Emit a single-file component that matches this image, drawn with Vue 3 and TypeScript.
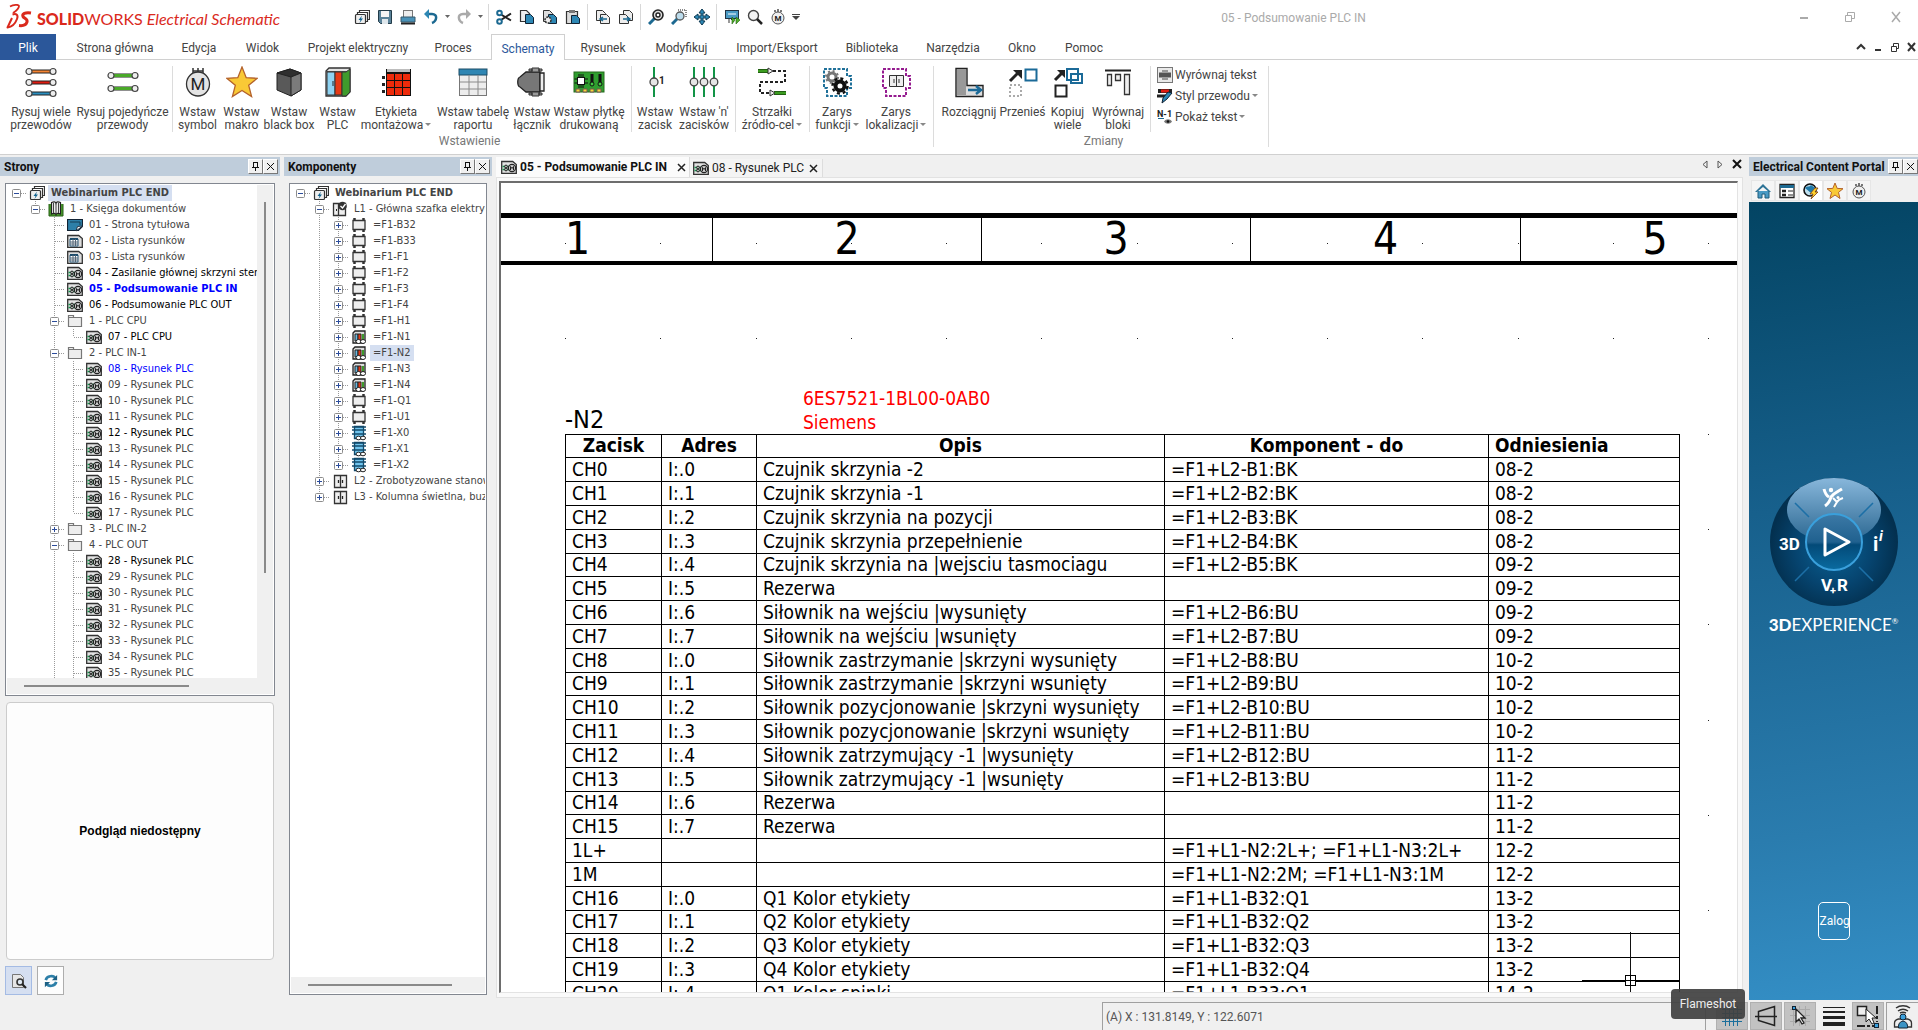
<script setup lang="ts">
interface RibbonItem { icon?: string; lines?: string[]; w?: number; caret?: boolean; sep?: boolean }
interface TreeRow { g: string; icon: string; text: string; cls?: string }

const icons: Record<string, string> = {
  wires3: `<g stroke="#222" fill="none"><path d="M4 5.500h24" stroke-width="4"/><path d="M4 16.500h24" stroke-width="4"/><path d="M4 27.500h24" stroke-width="4"/></g><path d="M4 5.500h24" stroke="#f58433" stroke-width="2"/><path d="M4 16.500h24" stroke="#e01b10" stroke-width="2"/><path d="M4 27.500h24" stroke="#2a8fc0" stroke-width="2"/><g fill="#eee" stroke="#444" stroke-width="1.200"><circle cx="4" cy="5.500" r="3"/><circle cx="28" cy="5.500" r="3"/><circle cx="4" cy="16.500" r="3"/><circle cx="28" cy="16.500" r="3"/><circle cx="4" cy="27.500" r="3"/><circle cx="28" cy="27.500" r="3"/></g>`,
  wires2: `<path d="M4 9.500h24M4 22.500h24" stroke="#222" stroke-width="4"/><path d="M4 9.500h24M4 22.500h24" stroke="#4aa929" stroke-width="3"/><g fill="#eee" stroke="#444" stroke-width="1.200"><circle cx="4" cy="9.500" r="3"/><circle cx="28" cy="9.500" r="3"/><circle cx="4" cy="22.500" r="3"/><circle cx="28" cy="22.500" r="3"/></g>`,
  motor: `<path d="M11 2v5M16 2v5M21 2v5M10.500 5h11" stroke="#333" stroke-width="1.500"/><ellipse cx="16" cy="18" rx="11.500" ry="12" fill="#e4e4e4" stroke="#333" stroke-width="1.300"/><text x="16" y="24" font-size="17" font-family="Roboto, sans-serif" text-anchor="middle" fill="#222">M</text>`,
  star: `<path d="M16 1l4.200 10.700 11 .6-8.500 7 2.900 11.200L16 24.500 6.400 30.500l2.900-11.200-8.500-7 11-.6z" fill="#f9c936" stroke="#b4622a" stroke-width="1.300"/>`,
  box: `<path d="M4 7l13-4 11 4v17l-10 6L4 24z" fill="#595959" stroke="#222"/><path d="M4 7l14 4 10-4-11-4z" fill="#2f2f2f" stroke="#222"/><path d="M18 11v19l10-6V7z" fill="#7b7b7b" stroke="#222"/>`,
  plc: `<path d="M4 5l3-3h21v24l-4 4H4z" fill="#e3e3e3" stroke="#333" stroke-width="1.300"/><path d="M4 5.500h21" stroke="#555"/><rect x="5" y="6" width="8" height="23" fill="#8fd3f2" stroke="#333"/><rect x="13" y="6" width="7" height="23" fill="#e53a16" stroke="#333"/><path d="M20 6h4l4-3v23l-4 4h-4z" fill="#3f9b2c" stroke="#333"/><path d="M11 15v5" stroke="#222"/>`,
  label: `<rect x="6" y="3" width="25" height="27" fill="#111"/><path d="M7 4.500h23" stroke="#bdbdbd" stroke-width="3"/><path d="M7 8h7v6H7zM15 8h7v6h-7zM23 8h7v6h-7zM7 15h7v6H7zM15 15h7v6h-7zM23 15h7v6h-7zM7 22h7v7H7zM15 22h7v7h-7zM23 22h7v7h-7z" fill="#ee2b0b"/><path d="M2 10h3v3H2zM2 17h3v3H2zM2 24h3v3H2z" fill="#222"/>`,
  table: `<rect x="2.500" y="3.500" width="27" height="26" fill="#ededed" stroke="#777"/><rect x="2" y="3" width="28" height="6" fill="#2f86b3" stroke="#1d4c66"/><path d="M3 16h26M3 23h26M12 9v20M21 9v20" stroke="#8a8a8a"/>`,
  connector: `<path d="M10 6h14v20H10l-6-5c-3-1-3-9 0-10z" fill="#777" stroke="#222" stroke-width="1.300"/><path d="M24 7h4v18h-4z" fill="#eee" stroke="#222" stroke-width="1.300"/><path d="M16 2h7v4h-7zM16 26h7v4h-7zM23 3h3v2h-3zM23 27h3v2h-3zM13 3h3v2h-3zM13 27h3v2h-3z" fill="#999" stroke="#333"/>`,
  pcb: `<rect x="1" y="6" width="30" height="20" fill="#2f9e2f" stroke="#246b1d"/><rect x="4.500" y="11.500" width="7" height="7" fill="#fff" stroke="#111"/><path d="M6 8v3M8 8v3M10 8v3M6 19v3M8 19v3M10 19v3M1.500 13h3M1.500 17h3M12 13h3M12 17h3" stroke="#111"/><path d="M19 8v9M27 8v9" stroke="#111" stroke-width="3"/><circle cx="19" cy="18" r="2" fill="#4c4" stroke="#111"/><circle cx="27" cy="18" r="2" fill="#4c4" stroke="#111"/><path d="M3 23h4v3H3zM10 23h4v3h-4zM17 23h4v3h-4zM24 23h4v3h-4z" fill="#f4d837" stroke="#755"/>`,
  term1: `<path d="M15 1v30" stroke="#129447" stroke-width="2"/><circle cx="15" cy="16" r="4" fill="#e6e6e6" stroke="#444" stroke-width="1.300"/><text x="20" y="18" font-size="10" font-weight="700" font-family="Roboto, sans-serif" fill="#222">1</text>`,
  termn: `<path d="M6 1v30M16 1v30M26 1v30" stroke="#129447" stroke-width="2"/><g fill="#e6e6e6" stroke="#444" stroke-width="1.300"><circle cx="6" cy="16" r="3.800"/><circle cx="16" cy="16" r="3.800"/><circle cx="26" cy="16" r="3.800"/></g>`,
  arrows: `<path d="M17 5h12v11H4v11h10" fill="none" stroke="#222" stroke-width="2" stroke-dasharray="3 2"/><path d="M2 5h12M18 27h12" stroke="#225f12" stroke-width="4"/><path d="M2 5h12M18 27h12" stroke="#3b9c20" stroke-width="2"/><path d="M12 2l5 3-5 3zM14 24l5 3-5 3z" fill="#eee" stroke="#333"/>`,
  func: `<path d="M3 3h23v7h4v12h-4v8H6v-8H3z" fill="none" stroke="#1f7099" stroke-width="2" stroke-dasharray="3 1.500"/><circle cx="11" cy="11" r="4" fill="none" stroke="#777" stroke-width="3"/><circle cx="11" cy="11" r="6" fill="none" stroke="#777" stroke-width="2" stroke-dasharray="2 2.700"/><circle cx="19" cy="20" r="4.500" fill="#fff" stroke="#111" stroke-width="4"/><circle cx="19" cy="20" r="7.500" fill="none" stroke="#111" stroke-width="2.500" stroke-dasharray="3 2.900"/>`,
  loc: `<path d="M3 3h23v7h4v12h-4v8H6v-8H3z" fill="none" stroke="#951b8f" stroke-width="2" stroke-dasharray="3 1.500"/><path d="M9.500 9.500h14v11h-14zM16.500 9.500v11" fill="#eee" stroke="#333"/><path d="M14 13v4M19 13v4" stroke="#333"/>`,
  stretch: `<path d="M3 2.500h11v17h16v11H3z" fill="#ddd" stroke="#222" stroke-width="1.400"/><path d="M4 3h9v26H4z" fill="#999"/><path d="M15 24h11M23 20l5 4-5 4" fill="none" stroke="#1b6a98" stroke-width="2.500"/>`,
  move: `<rect x="18.500" y="3.500" width="11" height="11" fill="#fff" stroke="#1b6a98" stroke-width="2"/><path d="M3 15L12 6" stroke="#222" stroke-width="3"/><path d="M6 4h9v9z" fill="#222"/><path d="M3 19h11v11H3z" fill="none" stroke="#aaa" stroke-width="2" stroke-dasharray="2 2"/>`,
  copy: `<path d="M15 3h11v11H15zM19 8h11v9H19z" fill="none" stroke="#1b6a98" stroke-width="2"/><path d="M3 14l7-7" stroke="#222" stroke-width="3"/><path d="M5 4h8v8z" fill="#222"/><rect x="3.500" y="19.500" width="11" height="11" fill="#fff" stroke="#222" stroke-width="2"/>`,
  align: `<path d="M3 4.500h26" stroke="#222" stroke-width="2"/><path d="M5.500 8.500h4v11h-4zM13.500 8.500h5v6h-5zM22.500 8.500h5v20h-5z" fill="#eee" stroke="#333" stroke-width="1.300"/>`,
}

const small: Record<string, string> = {
  project: `<path d="M5.500 3.500v-2h10v9h-2M3.500 5.500v-2h10v9h-2" fill="none" stroke="#333" stroke-width="1.200"/><rect x="1.500" y="5.500" width="10" height="9" rx="1" fill="#eee" stroke="#333" stroke-width="1.200"/><path d="M8 6.500L4.500 11h2L5.500 14 9 9.500H7z" fill="#12638f"/>`,
  save: `<path d="M1.500 1.500h13v13h-11l-2-2z" fill="#5a8299" stroke="#223b49"/><rect x="4" y="2" width="8" height="6" fill="#f5f5f5"/><rect x="5" y="10" width="6" height="5" fill="#dfe7ec"/>`,
  print: `<rect x="3.500" y="1.500" width="9" height="8" fill="#eee" stroke="#777"/><path d="M1 8h14v5H1z" fill="#4a92b8" stroke="#36586b"/><path d="M1 14.500h14" stroke="#222" stroke-width="2"/>`,
  undo: `<path d="M3 5h6c6 0 5 7 0 9" fill="none" stroke="#1c6991" stroke-width="2.500"/><path d="M1 5l5-5v10z" fill="#2d87b4"/>`,
  redo: `<path d="M13 5H7C1 5 2 12 7 14" fill="none" stroke="#aaa" stroke-width="2.500"/><path d="M15 5l-5-5v10z" fill="#aaa"/>`,
  cut: `<path d="M5 5.500l10 6M5 11l10-6.500" stroke="#222" stroke-width="2"/><circle cx="3.500" cy="4" r="2.300" fill="none" stroke="#1c6991" stroke-width="2"/><circle cx="3.500" cy="12.500" r="2.300" fill="none" stroke="#1c6991" stroke-width="2"/>`,
  copy: `<path d="M1.500 1.500h6l3 3v8h-9z" fill="#eee" stroke="#333" stroke-width="1.200"/><path d="M6.500 5.500h5l3 3v6h-8z" fill="#2d87b4" stroke="#123"/>`,
  copy2: `<path d="M1.500 1.500h6l3 3v8h-9z" fill="#ddd" stroke="#333"/><path d="M6.500 5.500h5l3 3v6h-8z" fill="#2d87b4" stroke="#123"/><circle cx="6" cy="11" r="3" fill="#eee" stroke="#333" stroke-width="1.600" stroke-dasharray="2 1"/>`,
  paste: `<path d="M1.500 2.500h11v12h-11z" fill="#ddd" stroke="#333" stroke-width="1.200"/><path d="M4 1h6v3H4z" fill="#777"/><path d="M6.500 6.500h5l3 3v5h-8z" fill="#2d87b4" stroke="#123"/>`,
  pageL: `<path d="M1.500 1.500h6l3 3v7h-9z" fill="#eee" stroke="#333"/><path d="M5.500 5.500h6l3 3v6h-9z" fill="#eee" stroke="#333"/><path d="M12 10H5m3-2l-3 2 3 2" stroke="#1c6991" stroke-width="1.500" fill="none"/>`,
  pageR: `<path d="M5.500 1.500h6l3 3v7h-9z" fill="#eee" stroke="#333"/><path d="M1.500 5.500h6l3 3v6h-9z" fill="#eee" stroke="#333"/><path d="M5 10h7m-3-2l3 2-3 2" stroke="#1c6991" stroke-width="1.500" fill="none"/>`,
  zoomfit: `<path d="M7 9l-6 6" stroke="#1c6991" stroke-width="3"/><circle cx="10" cy="6" r="5" fill="#ddd" stroke="#222" stroke-width="1.600"/><circle cx="10" cy="6" r="2" fill="#fff" stroke="#222" stroke-width="1.400"/>`,
  zoomsel: `<path d="M7 9l-6 6" stroke="#1c6991" stroke-width="3"/><path d="M7 1h8v8" fill="none" stroke="#111" stroke-dasharray="1 1"/><circle cx="9" cy="7" r="4" fill="#bcdcec" stroke="#555" stroke-width="1.300"/>`,
  pan: `<path d="M8 0l3 4H9v3h3V5l4 3-4 3V9H9v3h2l-3 4-3-4h2V9H4v2L0 8l4-3v2h3V4H5z" fill="#2d87b4" stroke="#0f3a52"/>`,
  display: `<rect x="1.500" y="1.500" width="13" height="8" fill="#4a9ac4" stroke="#234"/><path d="M4 5h8M6 10v3" stroke="#fff"/><path d="M5 10v4M7 10l3 3" stroke="#333"/><path d="M8 8l3 3-3 4zM12 8l4 3-4 4z" fill="#53b02c" stroke="#1f6113" stroke-width=".6"/>`,
  search: `<circle cx="6.500" cy="6.500" r="5" fill="#f3f3f3" stroke="#444" stroke-width="1.400"/><path d="M10 10l5 5" stroke="#222" stroke-width="2.500"/>`,
  motor: `<path d="M5 1v2M8 0v3M11 1v2" stroke="#333" stroke-width="1.300"/><circle cx="8" cy="9" r="6" fill="#eee" stroke="#555"/><text x="8" y="12" font-size="8" font-weight="700" font-family="Roboto, sans-serif" text-anchor="middle" fill="#222">M</text>`,
  book: `<path d="M1 3v12h14V3" fill="#4a9c2c" stroke="#245c14"/><path d="M3.500 1.500c2-1 4-1 4.500.500.500-1.500 2.500-1.500 4.500-.500V13c-2-1-4-1-4.500.500C7.500 12 5.500 12 3.500 13z" fill="#eee" stroke="#222" stroke-width="1.200"/><path d="M8 2v11M5.500 2v10M10.500 2v10" stroke="#444"/>`,
  cover: `<path d="M.5 2.500h15v7l-4 4H.5z" fill="#2d7fa8" stroke="#123" stroke-width="1.200"/><path d="M3 5h10v3" fill="none" stroke="#173f55"/><path d="M9 14l1.500-4.500 5-.5z" fill="#fff" stroke="#234"/>`,
  list: `<path d="M.7 2.500h11l3.600 3v8.800H.7z" fill="#ddd" stroke="#333" stroke-width="1.300"/><path d="M3 6h8v7H3z" fill="#fff" stroke="#2a5a7a"/><path d="M3 6h8" stroke="#1b4b6b" stroke-width="2"/><path d="M3 9h8M3 11h8M6 6v7M8.500 6v7" stroke="#567"/>`,
  drawing: `<path d="M.7 2.500h11l3.600 3v8.800H.7z" fill="#e2e2e2" stroke="#333" stroke-width="1.300"/><path d="M1.500 7.500h3M1.500 10.500h3M6 7.500h3M6 10.500h3" stroke="#13914a" stroke-width="1.400"/><circle cx="5" cy="7.500" r="1.400" fill="#bbb" stroke="#222"/><circle cx="5" cy="10.500" r="1.400" fill="#bbb" stroke="#222"/><circle cx="11" cy="9" r="3.600" fill="#ccc" stroke="#222" stroke-width="1.200"/><path d="M9.500 11V7.500l1.500 2 1.500-2V11" fill="none" stroke="#222"/>`,
  folder: `<path d="M1.500 13.500v-11h5v2h8v9z" fill="#eee" stroke="#777" stroke-width="1.200"/><path d="M1.500 4.500h5" stroke="#777"/>`,
  cabinetOn: `<path d="M1.500 2.500h12v12h-12zM6.500 2.500v12" fill="#eee" stroke="#333" stroke-width="1.300"/><path d="M4.500 8v2" stroke="#222"/><circle cx="10.500" cy="5" r="4.300" fill="#333"/><path d="M8.500 5l2 2 3-4" fill="none" stroke="#fff" stroke-width="1.300"/>`,
  cabinet: `<path d="M2.500 2.500h12v12h-12zM8.500 2.500v12" fill="#eee" stroke="#333" stroke-width="1.300"/><path d="M6.500 7v3M10.500 7v3" stroke="#222" stroke-width="1.300"/>`,
  comp: `<path d="M2 3.500h12v9H2z" fill="#eee" stroke="#333" stroke-width="1.300"/><path d="M3.500 1v2M12.500 1v2M3.500 13v2M12.500 13v2" stroke="#333" stroke-width="2.500"/>`,
  plc: `<path d="M2 4l2-2h10v10l-2 2H2z" fill="#ddd" stroke="#222" stroke-width="1.300"/><path d="M4 5h3v7H4z" fill="#68b9e0" stroke="#222"/><path d="M7 5h3v7H7z" fill="#e53a16" stroke="#222"/><path d="M11 5h2v6h-2z" fill="#3f9b2c"/><g fill="#fff" stroke="#222"><ellipse cx="7.500" cy="12.500" rx="2.500" ry="2"/><ellipse cx="12" cy="12.500" rx="2.500" ry="2"/></g>`,
  strip: `<path d="M3.500 1.500h9v12h-9z" fill="#6fc4ee" stroke="#124a6b" stroke-width="1.300"/><path d="M1 5h14M1 9h14M1 2h14" stroke="#124a6b" stroke-width="1.300"/><g fill="#fff" stroke="#222"><ellipse cx="7.500" cy="13" rx="2.500" ry="1.800"/><ellipse cx="12" cy="13" rx="2.500" ry="1.800"/></g>`,
  home: `<path d="M3 8v7h4v-4h3v4h4V8" fill="#4a9ac4" stroke="#1f5c7c"/><path d="M0 9l8-8 8 8h-2L8 4 2 9z" fill="#2d7396"/>`,
  form: `<path d="M1 1.500h14v13H1z" fill="#fff" stroke="#222" stroke-width="1.300"/><path d="M1 3.500h14" stroke="#1c6991" stroke-width="3"/><path d="M3 8h4M3 12h4" stroke="#222" stroke-width="2.500"/><path d="M9 8h5M9 12h5" stroke="#222"/>`,
  globe: `<circle cx="7" cy="7" r="6" fill="#bfe0ef" stroke="#111" stroke-width="1.600"/><path d="M2 5c3-3 4 0 6-3l4 3-4 5z" fill="#2079a8"/><path d="M12 5l-5 6h3l-2 5 7-7h-3l3-4z" fill="#ffd22e" stroke="#7a3d10" stroke-width=".8"/>`,
  star: `<path d="M8 0l2.200 5.400 5.800.300-4.500 3.700L13 15.500 8 12l-5 3.500 1.500-6.100L0 5.700l5.800-.3z" fill="#f9c936" stroke="#b4622a"/>`,
  txtAlign: `<rect x=".5" y=".5" width="15" height="15" fill="#e9e9e9" stroke="#777"/><path d="M5 4h6M5 12h6" stroke="#999" stroke-width="2"/><path d="M2 8h12" stroke="#555" stroke-width="5"/>`,
  wireStyle: `<path d="M1 3h14" stroke="#222" stroke-width="4"/><path d="M4 3h8" stroke="#e01b10" stroke-width="3"/><path d="M0 8h9" stroke="#222" stroke-width="3"/><path d="M15 5l-5 6-5 4 1-5 5-6z" fill="#2d87b4" stroke="#123"/>`,
  txtShow: `<text x="0" y="8" font-size="9" font-weight="700" font-family="Roboto, sans-serif" fill="#222">N-1</text><path d="M1 9.500h6" stroke="#1c6991"/><path d="M7 12.500c2-3 6-3 8 0-2 3-6 3-8 0z" fill="#777"/><circle cx="11" cy="12.500" r="1.300" fill="#111"/>`,
  preview: `<path d="M1.500 1.500h8l3 3v10h-11z" fill="#e6e6e6" stroke="#777"/><circle cx="9" cy="9" r="3" fill="#dfe9f3" stroke="#333" stroke-width="1.600"/><path d="M11 11l4 4" stroke="#222" stroke-width="2.200"/>`,
  refresh: `<path d="M2 7c1-5 9-6 11-2M14 9c-1 5-9 6-11 2" fill="none" stroke="#2d7fa8" stroke-width="3"/><path d="M15 1v6H9zM1 15V9h6z" fill="#1c5f83"/>`,
}

const qat: (string | null)[] = ['project', 'save', 'print', 'undo', 'caret', 'redo', 'caret', null, 'cut', 'copy', 'copy2', 'paste', null, 'pageL', 'pageR', null, 'zoomfit', 'zoomsel', 'pan', null, 'display', 'search', 'motor', 'more']

const tabs = [
  { t: 'Strona główna', w: 118 }, { t: 'Edycja', w: 50 }, { t: 'Widok', w: 77 }, { t: 'Projekt elektryczny', w: 114 },
  { t: 'Proces', w: 76 }, { t: 'Schematy', w: 74, on: true }, { t: 'Rysunek', w: 76 }, { t: 'Modyfikuj', w: 81 },
  { t: 'Import/Eksport', w: 110 }, { t: 'Biblioteka', w: 80 }, { t: 'Narzędzia', w: 82 }, { t: 'Okno', w: 56 }, { t: 'Pomoc', w: 68 },
]

const insertItems: RibbonItem[] = [
  { icon: 'wires3', lines: ['Rysuj wiele', 'przewodów'], w: 70 },
  { icon: 'wires2', lines: ['Rysuj pojedyńcze', 'przewody'], w: 93 },
  { sep: true },
  { icon: 'motor', lines: ['Wstaw', 'symbol'], w: 45 },
  { icon: 'star', lines: ['Wstaw', 'makro'], w: 43 },
  { icon: 'box', lines: ['Wstaw', 'black box'], w: 52 },
  { icon: 'plc', lines: ['Wstaw', 'PLC'], w: 45 },
  { icon: 'label', lines: ['Etykieta', 'montażowa'], w: 72, caret: true },
  { icon: 'table', lines: ['Wstaw tabelę', 'raportu'], w: 82 },
  { icon: 'connector', lines: ['Wstaw', 'łącznik'], w: 36 },
  { icon: 'pcb', lines: ['Wstaw płytkę', 'drukowaną'], w: 78 },
  { sep: true },
  { icon: 'term1', lines: ['Wstaw', 'zacisk'], w: 42 },
  { icon: 'termn', lines: ["Wstaw 'n'", 'zacisków'], w: 56 },
  { sep: true },
  { icon: 'arrows', lines: ['Strzałki', 'źródło-cel'], w: 68, caret: true },
  { sep: true },
  { icon: 'func', lines: ['Zarys', 'funkcji'], w: 50, caret: true },
  { icon: 'loc', lines: ['Zarys', 'lokalizacji'], w: 68, caret: true },
]
const editItems: RibbonItem[] = [
  { icon: 'stretch', lines: ['Rozciągnij'], w: 60 },
  { icon: 'move', lines: ['Przenieś'], w: 47 },
  { icon: 'copy', lines: ['Kopiuj', 'wiele'], w: 43 },
  { icon: 'align', lines: ['Wyrównaj', 'bloki'], w: 58 },
]
const textItems = [
  { icon: 'txtAlign', t: 'Wyrównaj tekst', caret: false },
  { icon: 'wireStyle', t: 'Styl przewodu', caret: true },
  { icon: 'txtShow', t: 'Pokaż tekst', caret: true },
]

// Guide codes: r root, m/M collapse (last/more), p/P expand (last/more), t tee, l elbow, | line
const drawing = (n: number, last = false, cls = ''): TreeRow => ({ g: last ? '  |l' : '  |t', icon: 'drawing', text: `${n} - Rysunek PLC`.padStart(16, '0'), cls })
const pages: TreeRow[] = [
  { g: 'r', icon: 'project', text: 'Webinarium PLC END', cls: 'bold marked' },
  { g: ' m', icon: 'book', text: '1 - Księga dokumentów' },
  { g: '  t', icon: 'cover', text: '01 - Strona tytułowa' },
  { g: '  t', icon: 'list', text: '02 - Lista rysunków' },
  { g: '  t', icon: 'list', text: '03 - Lista rysunków' },
  { g: '  t', icon: 'drawing', text: '04 - Zasilanie głównej skrzyni stero', cls: 'black' },
  { g: '  t', icon: 'drawing', text: '05 - Podsumowanie PLC IN', cls: 'bold blue' },
  { g: '  t', icon: 'drawing', text: '06 - Podsumowanie PLC OUT', cls: 'black' },
  { g: '  M', icon: 'folder', text: '1 - PLC CPU' },
  { g: '  |l', icon: 'drawing', text: '07 - PLC CPU', cls: 'black' },
  { g: '  M', icon: 'folder', text: '2 - PLC IN-1' },
  drawing(8, false, 'blue'), drawing(9), drawing(10), drawing(11), drawing(12, false, 'black'),
  drawing(13), drawing(14), drawing(15), drawing(16), drawing(17, true),
  { g: '  P', icon: 'folder', text: '3 - PLC IN-2' },
  { g: '  M', icon: 'folder', text: '4 - PLC OUT' },
  drawing(28, false, 'black'), drawing(29), drawing(30), drawing(31), drawing(32), drawing(33), drawing(34), drawing(35),
]
const comp = (name: string, icon = 'comp', cls = '', last = false): TreeRow => ({ g: last ? ' |p' : ' |P', icon, text: `=F1-${name}`, cls })
const components: TreeRow[] = [
  { g: 'r', icon: 'project', text: 'Webinarium PLC END', cls: 'bold' },
  { g: ' M', icon: 'cabinetOn', text: 'L1 - Główna szafka elektryc' },
  comp('B32'), comp('B33'), comp('F1'), comp('F2'), comp('F3'), comp('F4'), comp('H1'),
  comp('N1', 'plc'), comp('N2', 'plc', 'marked'), comp('N3', 'plc'), comp('N4', 'plc'),
  comp('Q1'), comp('U1'), comp('X0', 'strip'), comp('X1', 'strip'), comp('X2', 'strip', '', true),
  { g: ' P', icon: 'cabinet', text: 'L2 - Zrobotyzowane stanow' },
  { g: ' p', icon: 'cabinet', text: 'L3 - Kolumna świetlna, buzz' },
]
const trees = { pages, components }

function guide(c: string): string {
  let s = ''
  const line = (d: string) => `<path d="${d}" stroke="#9a9a9a" stroke-dasharray="1 1" fill="none"/>`
  if ('mpl'.includes(c)) s += line('M9.500 0v8')
  if ('MPt|'.includes(c)) s += line('M9.500 0v16')
  if (c !== '|' && c !== ' ') s += line('M10 8.500h9')
  if ('rmMpP'.includes(c)) {
    s += '<rect x="5.500" y="4.500" width="8" height="8" rx="1" fill="#fff" stroke="#8c8c8c"/><path d="M7 8.500h5" stroke="#2b4c9b"/>'
    if ('pP'.includes(c)) s += '<path d="M9.500 6v5" stroke="#2b4c9b"/>'
  }
  return s
}

const rows: string[][] = [
  ['CH0', 'I:.0', 'Czujnik skrzynia -2', '=F1+L2-B1:BK', '08-2'],
  ['CH1', 'I:.1', 'Czujnik skrzynia -1', '=F1+L2-B2:BK', '08-2'],
  ['CH2', 'I:.2', 'Czujnik skrzynia na pozycji', '=F1+L2-B3:BK', '08-2'],
  ['CH3', 'I:.3', 'Czujnik skrzynia przepełnienie', '=F1+L2-B4:BK', '08-2'],
  ['CH4', 'I:.4', 'Czujnik skrzynia na |wejsciu tasmociagu', '=F1+L2-B5:BK', '09-2'],
  ['CH5', 'I:.5', 'Rezerwa', '', '09-2'],
  ['CH6', 'I:.6', 'Siłownik na wejściu |wysunięty', '=F1+L2-B6:BU', '09-2'],
  ['CH7', 'I:.7', 'Siłownik na wejściu |wsunięty', '=F1+L2-B7:BU', '09-2'],
  ['CH8', 'I:.0', 'Siłownik zastrzymanie |skrzyni wysunięty', '=F1+L2-B8:BU', '10-2'],
  ['CH9', 'I:.1', 'Siłownik zastrzymanie |skrzyni wsunięty', '=F1+L2-B9:BU', '10-2'],
  ['CH10', 'I:.2', 'Siłownik pozycjonowanie |skrzyni wysunięty', '=F1+L2-B10:BU', '10-2'],
  ['CH11', 'I:.3', 'Siłownik pozycjonowanie |skrzyni wsunięty', '=F1+L2-B11:BU', '10-2'],
  ['CH12', 'I:.4', 'Siłownik zatrzymujący -1 |wysunięty', '=F1+L2-B12:BU', '11-2'],
  ['CH13', 'I:.5', 'Siłownik zatrzymujący -1 |wsunięty', '=F1+L2-B13:BU', '11-2'],
  ['CH14', 'I:.6', 'Rezerwa', '', '11-2'],
  ['CH15', 'I:.7', 'Rezerwa', '', '11-2'],
  ['1L+', '', '', '=F1+L1-N2:2L+; =F1+L1-N3:2L+', '12-2'],
  ['1M', '', '', '=F1+L1-N2:2M; =F1+L1-N3:1M', '12-2'],
  ['CH16', 'I:.0', 'Q1 Kolor etykiety', '=F1+L1-B32:Q1', '13-2'],
  ['CH17', 'I:.1', 'Q2 Kolor etykiety', '=F1+L1-B32:Q2', '13-2'],
  ['CH18', 'I:.2', 'Q3 Kolor etykiety', '=F1+L1-B32:Q3', '13-2'],
  ['CH19', 'I:.3', 'Q4 Kolor etykiety', '=F1+L1-B32:Q4', '13-2'],
  ['CH20', 'I:.4', 'Q1 Kolor spinki', '=F1+L1-B33:Q1', '14-2'],
]
const dots: { x: number; y: number }[] = []
for (let r = 0; r < 9; r++) for (let c = 0; c < 13; c++) dots.push({ x: 64 + Math.round(c * 95.25), y: 60 + Math.round(r * 95.3) })
</script>

<template>
  <div class="app">
    <header class="title">
      <svg class="ds" width="26" height="26" viewBox="0 0 26 26" fill="none" stroke="#da291c" stroke-linejoin="round">
        <path d="M4 2.500c3-1.500 9-2.500 9-.5 0 2-3 5-6 7" stroke-width="1.800" />
        <path d="M6.500 10.500c4-1.500 6 .5 4.500 4.500-1.500 4-5 8-9.500 8.500l4.500-9.500" stroke-width="2" />
        <path d="M25 9c-6-1-9 1-8 3.500 1 2 5 2.500 4 5.500-1 3-4 4-8 3.500" stroke-width="3" />
      </svg>
      <h1 class="brand"><b>SOLID</b>WORKS <i>Electrical Schematic</i></h1>
      <div class="qat">
        <template v-for="(q, i) in qat" :key="i">
          <span v-if="q === null" class="qsep"></span>
          <button v-else-if="q === 'caret'" class="qcaret" aria-label="Lista"><svg width="5" height="3"><path d="M0 0h5L2.500 3z" fill="#666" /></svg></button>
          <button v-else-if="q === 'more'" class="qcaret more" aria-label="Dostosuj"><svg width="8" height="6"><path d="M0 0h8v1H0zM0 2h8L4 6z" fill="#444" /></svg></button>
          <button v-else class="qbtn" :aria-label="q"><svg width="16" height="16" viewBox="0 0 16 16" v-html="small[q]"></svg></button>
        </template>
      </div>
      <div class="caption">05 - Podsumowanie PLC IN</div>
      <div class="win">
        <button aria-label="Minimalizuj"><svg width="12" height="12"><path d="M2 7h8" stroke="#aaa" stroke-width="2" /></svg></button>
        <button aria-label="Przywróć"><svg width="12" height="12"><path d="M1.500 4.500h6v6h-6zM3.500 4V1.500h7v6H8" fill="none" stroke="#aaa" /></svg></button>
        <button aria-label="Zamknij"><svg width="12" height="12"><path d="M2 1l8 10M10 1L2 11" stroke="#aaa" stroke-width="1.500" /></svg></button>
      </div>
    </header>

    <nav class="tabs">
      <button class="file">Plik</button>
      <button v-for="t in tabs" :key="t.t" class="tab" :class="{ on: t.on }" :style="{ width: t.w + 'px' }">{{ t.t }}</button>
      <div class="mdi">
        <svg width="12" height="12"><path d="M2 8l4-4 4 4" fill="none" stroke="#333" stroke-width="2" /></svg>
        <svg width="12" height="12"><path d="M3 9h6" stroke="#333" stroke-width="2" /></svg>
        <svg width="12" height="12"><path d="M2.500 5.500h5v5h-5zM4.500 5V2.500h5v5H8" fill="none" stroke="#333" /></svg>
        <svg width="12" height="12"><path d="M2 2l7 8M9 2l-7 8" stroke="#333" stroke-width="2" /></svg>
      </div>
    </nav>

    <section class="ribbon">
      <div class="group first">
        <div class="items">
          <template v-for="(it, i) in insertItems" :key="i">
            <span v-if="it.sep" class="rsep"></span>
            <button v-else class="rbtn" :style="{ width: it.w + 'px' }">
              <svg width="32" height="32" viewBox="0 0 32 32" v-html="icons[it.icon!]"></svg>
              <span>{{ it.lines![0] }}</span>
              <span>{{ it.lines![1] }}<i v-if="it.caret" class="car"></i></span>
            </button>
          </template>
        </div>
        <div class="glabel">Wstawienie</div>
      </div>
      <div class="group second">
        <div class="items">
          <button v-for="it in editItems" :key="it.icon" class="rbtn" :style="{ width: it.w + 'px' }">
            <svg width="32" height="32" viewBox="0 0 32 32" v-html="icons[it.icon!]"></svg>
            <span v-for="l in it.lines" :key="l">{{ l }}</span>
          </button>
          <span class="rsep"></span>
          <div class="stack">
            <button v-for="it in textItems" :key="it.t"><svg width="16" height="16" viewBox="0 0 16 16" v-html="small[it.icon]"></svg><span>{{ it.t }}<i v-if="it.caret" class="car"></i></span></button>
          </div>
        </div>
        <div class="glabel">Zmiany</div>
      </div>
    </section>

    <main class="main">
      <aside v-for="(list, key) in trees" :key="key" class="panel" :class="key">
        <div class="phead">
          <h2>{{ key === 'pages' ? 'Strony' : 'Komponenty' }}</h2>
          <button class="pb" aria-label="Przypnij"><svg width="9" height="9"><path d="M2.500 1v4M6.500 1v4M2 .5h5M1 5.500h7M4.500 6v3" stroke="#111" fill="none" /></svg></button>
          <button class="pb" aria-label="Zamknij"><svg width="9" height="9"><path d="M1 1l7 7M8 1L1 8" stroke="#111" /></svg></button>
        </div>
        <div class="treebox">
          <div class="mid">
            <ul class="tree">
              <li v-for="(n, i) in list" :key="i">
                <svg v-for="(c, j) in n.g" :key="j" class="gd" width="19" height="16" v-html="guide(c)"></svg>
                <svg class="ni" width="16" height="16" viewBox="0 0 16 16" v-html="small[n.icon]"></svg>
                <span :class="n.cls">{{ n.text }}</span>
              </li>
            </ul>
            <div v-if="key === 'pages'" class="vbar"><i></i></div>
          </div>
          <div class="hbar"><i></i></div>
        </div>
        <template v-if="key === 'pages'">
          <div class="preview">Podgląd niedostępny</div>
          <div class="pbtns">
            <button class="sel" aria-label="Podgląd"><svg width="16" height="16" viewBox="0 0 16 16" v-html="small.preview"></svg></button>
            <button aria-label="Odśwież"><svg width="14" height="14" viewBox="0 0 16 16" v-html="small.refresh"></svg></button>
          </div>
        </template>
      </aside>

      <section class="doc">
        <div class="dtabs">
          <button class="dtab on"><svg width="16" height="16" viewBox="0 0 16 16" v-html="small.drawing"></svg><span>05 - Podsumowanie PLC IN</span><svg width="9" height="9"><path d="M1 1l7 7M8 1L1 8" stroke="#222" stroke-width="1.500" /></svg></button>
          <button class="dtab"><svg width="16" height="16" viewBox="0 0 16 16" v-html="small.drawing"></svg><span>08 - Rysunek PLC</span><svg width="9" height="9"><path d="M1 1l7 7M8 1L1 8" stroke="#222" stroke-width="1.500" /></svg></button>
          <div class="dnav">
            <svg width="6" height="9"><path d="M5 1v7L1 4.500z" fill="none" stroke="#555" /></svg>
            <svg width="6" height="9"><path d="M1 1v7l4-3.500z" fill="none" stroke="#555" /></svg>
            <svg width="10" height="10"><path d="M1 1l8 8M9 1L1 9" stroke="#111" stroke-width="2" /></svg>
          </div>
        </div>
        <div class="frame">
          <div class="canvas">
            <svg class="dots" width="1300" height="860"><rect v-for="(d, i) in dots" :key="i" :x="d.x" :y="d.y" width="1" height="1" fill="#222" /></svg>
            <div class="strip"><span v-for="n in 5" :key="n">{{ n }}</span></div>
            <div class="heading">
              <div class="mark">-N2</div>
              <div class="part">6ES7521-1BL00-0AB0<br />Siemens</div>
            </div>
            <table class="io">
              <colgroup><col class="c1" /><col class="c2" /><col class="c3" /><col class="c4" /><col class="c5" /></colgroup>
              <thead><tr><th>Zacisk</th><th>Adres</th><th>Opis</th><th>Komponent - do</th><th>Odniesienia</th></tr></thead>
              <tbody><tr v-for="r in rows" :key="r[0]"><td v-for="(c, i) in r" :key="i">{{ c }}</td></tr></tbody>
            </table>
            <svg class="cross" width="98" height="60"><path d="M48.500 0v43M48.500 54v6" stroke="#111" /><path d="M0 49h98" stroke="#000" stroke-width="2" /><rect x="43.500" y="43.500" width="10" height="10" fill="#fff" stroke="#000" /><path d="M48.500 44v10M44 48.500h10" stroke="#000" /></svg>
          </div>
        </div>
      </section>

      <aside class="panel ecp">
        <div class="phead">
          <h2>Electrical Content Portal</h2>
          <button class="pb" aria-label="Przypnij"><svg width="9" height="9"><path d="M2.500 1v4M6.500 1v4M2 .5h5M1 5.500h7M4.500 6v3" stroke="#111" fill="none" /></svg></button>
          <button class="pb" aria-label="Zamknij"><svg width="9" height="9"><path d="M1 1l7 7M8 1L1 8" stroke="#111" /></svg></button>
        </div>
        <div class="etabs">
          <button v-for="n in ['home', 'form', 'globe', 'star', 'motor']" :key="n" :class="{ on: n === 'globe' }" :aria-label="n"><svg width="16" height="16" viewBox="0 0 16 16" v-html="small[n]"></svg></button>
        </div>
        <div class="portal">
          <svg class="compass" width="130" height="130" viewBox="0 0 130 130">
            <defs>
              <radialGradient id="ball" cx=".5" cy=".55" r=".5"><stop offset="0" stop-color="#0a6396" /><stop offset=".6" stop-color="#06446f" /><stop offset="1" stop-color="#03304f" /></radialGradient>
              <linearGradient id="glass" x1="0" y1="0" x2="0" y2="1"><stop offset="0" stop-color="#88b7db" /><stop offset="1" stop-color="#2a6690" /></linearGradient>
              <linearGradient id="core" x1="0" y1="0" x2="0" y2="1"><stop offset="0" stop-color="#3c79a6" /><stop offset=".5" stop-color="#20618f" /><stop offset=".55" stop-color="#034a78" /><stop offset="1" stop-color="#0a6ba0" /></linearGradient>
            </defs>
            <circle cx="65" cy="65" r="64" fill="url(#ball)" />
            <ellipse cx="65" cy="33" rx="47" ry="32" fill="url(#glass)" />
            <path d="M26 26l14 14M104 26L90 40M26 104l14-14M104 104L90 90" stroke="#1c6fa6" stroke-width="1.500" />
            <circle cx="65" cy="65" r="28" fill="url(#core)" stroke="#3aa0dc" stroke-width="2" />
            <path d="M56 52v26l24-13z" fill="none" stroke="#fff" stroke-width="3" stroke-linejoin="round" />
            <g stroke="#fff" fill="none"><path d="M55 12c1 4 3 7 5 8M73 12c-5 3-8 4-11 8-1 4-3 7-6 9" stroke-width="3" /><path d="M64 21l4 4M74 21c-3 1-5 2-6 4l-3 5" stroke-width="2" /></g><circle cx="62" cy="13" r="2.200" fill="#fff" /><circle cx="69" cy="20.500" r="1.500" fill="#fff" />
            <g fill="#fff" font-family="Roboto, sans-serif" font-weight="700"><text x="10" y="73" font-size="17">3D</text><text x="52" y="114" font-size="17">V</text><text x="61" y="117" font-size="11">+</text><text x="68" y="114" font-size="17">R</text><text x="104" y="74" font-size="20">i</text><text x="110" y="64" font-size="15" font-style="italic">i</text></g>
          </svg>
          <div class="exp"><b>3D</b>EXPERIENCE<sup>®</sup></div>
          <button class="login">Zalog</button>
        </div>
      </aside>
    </main>

    <footer class="status">
      <output class="coords">(A) X : 131.8149, Y : 122.6071</output>
      <button class="sb dark" aria-label="Siatka"><svg width="24" height="24"><path d="M5.500 2v20M9.500 2v20M13.500 2v20M17.500 2v20M2 5.500h20M2 9.500h20M2 13.500h20M2 17.500h20" stroke="#1b6f9c" /></svg></button>
      <button class="sb dark" aria-label="Ortogonalnie"><svg width="24" height="24"><path d="M4.500 7.500l16-5v19l-16-5z" fill="none" stroke="#222" stroke-width="1.500" /><path d="M1 12.500h22" stroke="#222" stroke-width="1.500" /></svg></button>
      <button class="sb dark" aria-label="Przyciąganie"><svg width="24" height="24"><path d="M5.500 2v20M11.500 2v20M17.500 2v20M2 5.500h20M2 11.500h20M2 17.500h20" stroke="#aaa" /><path d="M8 5v13l3-3 3 5 2-1-3-5h4z" fill="#eee" stroke="#222" stroke-width="1.300" /><rect x="4.500" y="2.500" width="3" height="3" fill="#3aa0dc" stroke="#123" /></svg></button>
      <button class="sb" aria-label="Grubość linii"><svg width="24" height="24"><path d="M1 3.500h22" stroke="#222" /><path d="M1 8h22" stroke="#222" stroke-width="2" /><path d="M1 13.500h22" stroke="#222" stroke-width="3" /><path d="M1 20h22" stroke="#222" stroke-width="4" /></svg></button>
      <button class="sb dark" aria-label="Wybór"><svg width="24" height="24"><path d="M1.500 2.500h9v9h-9z" fill="#eee" stroke="#222" stroke-width="1.500" /><path d="M21 2v16M1 22h19" stroke="#222" stroke-width="2" stroke-dasharray="8 2 3 2" /><path d="M10 5v13l3-3 3 5 2-1-2-5h4z" fill="#fff" stroke="#222" /><rect x="18.500" y="19.500" width="4" height="4" fill="#3aa0dc" stroke="#123" /></svg></button>
      <button class="sb edge" aria-label="Użytkownicy"><svg width="24" height="24"><path d="M5 3c4-3 10-3 14 0M7 6c3-2 7-2 10 0M9 8c2-1 4-1 6 0" fill="none" stroke="#333" stroke-width="1.500" /><path d="M3.500 22v-4c0-3 4-4 4-4h9s4 1 4 4v4z" fill="#eee" stroke="#333" stroke-width="1.300" /><circle cx="12" cy="12" r="3" fill="#3aa0dc" stroke="#123" /><path d="M7.500 23c-1-9 10-9 9 0z" fill="#3a93c4" stroke="#123" /></svg></button>
      <div class="tip">Flameshot</div>
    </footer>
  </div>
</template>

<style>
body { margin: 0; }
</style>
<style scoped>
.app { position: relative; display: flex; flex-direction: column; height: 100vh; overflow: hidden; background: #f0f0f0; color: #444; font: 12px/16px Roboto, "Open Sans", sans-serif; }
* { box-sizing: border-box; }
button { border: 0; padding: 0; margin: 0; background: none; font: inherit; color: inherit; }
svg { flex: none; display: block; }
h1, h2, ul { margin: 0; padding: 0; font-weight: 400; }
.title { display: flex; align-items: center; height: 34px; background: #fff; flex: none; }
.ds { margin-left: 6px; }
.brand { font: 16px/20px Lato, sans-serif; color: #da291c; width: 318px; padding: 4px 0 0 5px; white-space: nowrap; }
.brand b { font-weight: 900; }
.qat { display: flex; align-items: center; padding-bottom: 1px; }
.qbtn { width: 23px; height: 24px; display: grid; place-items: center; flex: none; }
.qcaret { width: 10px; height: 24px; display: grid; place-items: center; flex: none; }
.more { width: 14px; }
.qsep { width: 1px; height: 26px; background: #d8d8d8; margin: 0 3px; }
.caption { flex: 1; text-align: center; color: #aaa; padding: 2px 14px 0 0; }
.win { display: flex; gap: 34px; padding-right: 16px; }
.tabs { display: flex; height: 26px; background: #fff; border-bottom: 1px solid #d0d0d0; flex: none; }
.file { width: 56px; background: #2b579a; color: #fff; height: 26px; padding-top: 1px; }
.tab { height: 26px; white-space: nowrap; text-align: center; padding-top: 2px; }
.tab.on { border: 1px solid #d0d0d0; border-bottom: 0; background: #fff; color: #2b579a; }
.mdi { display: flex; gap: 5px; align-items: center; margin-left: auto; }
.ribbon { display: flex; height: 95px; background: #fff; border-bottom: 1px solid #d0d0d0; flex: none; }
.group { display: flex; flex-direction: column; border-right: 1px solid #dcdcdc; margin: 6px 0 7px; }
.first { width: 934px; padding-left: 6px; }
.second { width: 335px; padding-left: 5px; }
.items { display: flex; height: 68px; }
.glabel { text-align: center; color: #777; line-height: 14px; margin-top: 2px; }
.rbtn { display: flex; flex-direction: column; align-items: center; white-space: nowrap; line-height: 13px; flex: none; }
.rbtn svg { margin-bottom: 8px; }
.car { display: inline-block; border: 3px solid transparent; border-top-color: #888; border-bottom: 0; margin: 0 0 3px 2px; }
.rsep { width: 6px; flex: none; background: linear-gradient(#dcdcdc, #dcdcdc) center / 1px 100% no-repeat; }
.stack { display: flex; flex-direction: column; gap: 5px; padding: 1px 0 0 4px; }
.stack button { display: flex; gap: 2px; align-items: center; height: 16px; white-space: nowrap; }
.main { display: flex; flex: 1; min-height: 0; padding-top: 2px; }
.panel { display: flex; flex-direction: column; flex: none; }
.pages { width: 280px; margin-right: 4px; }
.components { width: 208px; margin-right: 4px; }
.ecp { width: 169px; margin-left: 6px; }
.phead { display: flex; align-items: center; height: 19px; background: #bfcddb; padding: 0 2px 0 4px; flex: none; }
.phead h2 { font-size: 12px; font-weight: 700; color: #111; flex: 1; white-space: nowrap; }
.ecp .phead { padding-right: 0; }
.pb { width: 15px; height: 15px; background: #f0f0f0; border: 1px solid #fff; border-right-color: #777; border-bottom-color: #777; display: grid; place-items: center; flex: none; }
.treebox { display: flex; flex-direction: column; flex: 1; min-height: 0; margin: 7px 5px 0; border: 1px solid #828790; background: #fff; padding: 1px; }
.components .treebox { margin-bottom: 5px; }
.mid { display: flex; flex: 1; min-height: 0; }
.tree { list-style: none; flex: 1; overflow: hidden; min-width: 0; font: 11px/16px "DejaVu Sans Condensed", "DejaVu Sans", sans-serif; }
.tree li { display: flex; height: 16px; }
.ni { margin-left: 3px; }
.tree span { margin-left: 3px; padding: 0 3px; white-space: nowrap; }
.bold { font-weight: 700; }
.marked { background: #d5dff1; }
.black { color: #000; }
.blue { color: #00f; }
.vbar { width: 16px; background: #f0f0f0; flex: none; padding: 17px 7px 105px; display: flex; }
.vbar i { width: 2px; background: #8a8a8a; }
.hbar { height: 16px; background: #f0f0f0; flex: none; padding: 7px 0 0 17px; }
.hbar i { display: block; width: 165px; height: 2px; background: #8a8a8a; }
.components .hbar i { width: 144px; }
.preview { height: 258px; margin: 6px; border: 1px solid #ccc; border-radius: 4px; background: #fdfdfd; display: grid; place-items: center; color: #000; font: 700 12px/16px "Liberation Sans", sans-serif; flex: none; }
.pbtns { display: flex; gap: 5px; padding: 0 0 5px 5px; flex: none; }
.pbtns button { width: 27px; height: 29px; border: 1px solid #adadad; background: #fdfdfd; display: grid; place-items: center; }
.pbtns .sel { background: #d5dff1; border-color: #a4bbe4; }
.doc { flex: 1; min-width: 0; display: flex; flex-direction: column; padding-bottom: 2px; }
.dtabs { display: flex; height: 20px; align-items: flex-end; flex: none; }
.dtab { display: flex; align-items: center; gap: 3px; height: 18px; padding: 0 4px 0 3px; background: #f4f4f4; color: #222; border-right: 1px solid #ddd; white-space: nowrap; }
.dtab.on { height: 20px; background: #fbfbfb; font-weight: 700; padding: 0 3px 0 5px; color: #111; }
.dtab.on span { padding-right: 7px; }
.dtab span { padding-right: 2px; }
.dnav { display: flex; gap: 9px; align-items: center; margin: 0 1px 8px auto; }
.frame { flex: 1; min-height: 0; border: 1px solid #e2e2e2; background: #fafafa; padding: 3px 4px 4px 2px; display: flex; }
.canvas { position: relative; flex: 1; min-width: 0; border: 2px solid #6d6d6d; border-right: 1px solid #e3e3e3; border-bottom: 1px solid #e3e3e3; background: #fff; overflow: hidden; color: #000; font: 19px/24px "DejaVu Sans Condensed", "DejaVu Sans", sans-serif; }
.dots { position: absolute; left: 0; top: 0; }
.strip { display: flex; margin-top: 30px; border-top: 5px solid #000; border-bottom: 4px solid #000; height: 52px; font-size: 44px; line-height: 41px; text-align: center; }
.strip span { width: 269px; flex: none; border-left: 1px solid #000; }
.strip span:first-child { width: 211px; padding-right: 58px; border-left: 0; }
.strip span:nth-child(4) { width: 270px; }
.heading { display: flex; align-items: flex-end; height: 169px; padding-left: 64px; }
.mark { font-size: 25px; line-height: 28px; width: 238px; }
.part { color: #f00; }
.io { position: relative; margin-left: 64px; width: 1114px; table-layout: fixed; border-collapse: collapse; background: #fff; }
.c1 { width: 96px; } .c2 { width: 95px; } .c3 { width: 408px; } .c4 { width: 324px; } .c5 { width: 191px; }
.io th, .io td { border: 1px solid #000; padding: 0 0 2px 6px; line-height: 20px; white-space: nowrap; overflow: hidden; text-align: left; }
.io th { text-align: center; padding-left: 0; }
.io th:last-child { text-align: left; padding-left: 6px; }
.io tr { height: 24px; }
.io thead tr, .io tbody tr:nth-child(5n) { height: 23px; }
.cross { position: absolute; right: 57px; bottom: 0; }
.etabs { display: flex; height: 26px; align-items: flex-end; padding: 0 0 1px 2px; flex: none; }
.etabs button { width: 24px; height: 21px; display: grid; place-items: center; background: #f5f5f5; border: 1px solid #e6e6e6; }
.etabs .on { background: #fff; }
.portal { flex: 1; display: flex; flex-direction: column; align-items: center; background: linear-gradient(172deg, #034463 0%, #17608c 38%, #2a7cae 78%, #348fc6 100%); padding-top: 275px; color: #fff; }
.exp { font: 17px/20px Lato, sans-serif; margin-top: 8px; white-space: nowrap; height: 20px; }
.exp b { font-weight: 900; }
.exp sup { font-size: 8px; line-height: 8px; }
.login { width: 32px; height: 38px; margin-top: auto; margin-bottom: 60px; border: 1px solid #fff; border-radius: 5px; overflow: hidden; padding-left: 1px; text-align: left; }
.status { position: relative; display: flex; justify-content: flex-end; height: 30px; padding-top: 2px; gap: 2px; flex: none; }
.coords { width: 604px; border: 1px solid #a0a0a0; border-bottom: 0; margin-right: 8px; line-height: 28px; padding-left: 3px; color: #555; }
.sb { width: 32px; height: 28px; display: grid; place-items: center; flex: none; }
.dark { background: #c2c2c2; border: 1px solid #b0b0b0; }
.edge { border-left: 1px solid #a0a0a0; border-top: 1px solid #a0a0a0; }
.tip { position: absolute; right: 173px; bottom: 11px; width: 74px; height: 30px; border-radius: 4px; background: rgba(64, 64, 64, 0.92); color: #eee; line-height: 30px; text-align: center; }
</style>
